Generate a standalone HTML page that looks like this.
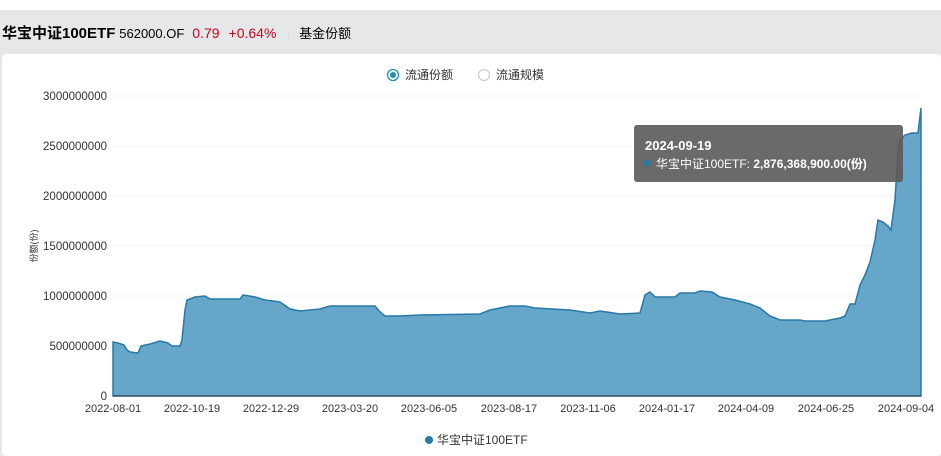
<!DOCTYPE html><html><head><meta charset="utf-8"><style>
body{margin:0;width:941px;height:456px;overflow:hidden;background:#fff;font-family:"Liberation Sans","Noto Sans CJK SC",sans-serif}
.band{position:absolute;left:0;top:10px;width:941px;height:446px;background:#e6e7e9}
.hdr{position:absolute;left:2px;top:22px;font-size:14px;white-space:nowrap}
.card{position:absolute;left:2px;top:54px;width:939px;height:402px;background:#fff;border-radius:4px}
</style></head><body>
<div class="band"></div>
<div class="hdr"><b style="font-size:15px">华宝中证100ETF</b> <span style="font-size:13px">562000.OF</span><span style="color:#d0021b;margin-left:8px">0.79</span><span style="color:#d0021b;margin-left:9px">+0.64%</span><span style="color:#ddd;margin-left:10px">|</span><span style="margin-left:9px;font-size:13px">基金份额</span></div>
<div class="card"></div>
<svg width="941" height="456" style="position:absolute;left:0;top:0" font-family="Liberation Sans,Noto Sans CJK SC,sans-serif">
<circle cx="393" cy="75" r="5.5" fill="none" stroke="#1e90b0" stroke-width="1.3"/><circle cx="393" cy="75" r="3" fill="#1e90b0"/>
<text x="405" y="79" font-size="12" fill="#333">流通份额</text>
<circle cx="484" cy="75" r="5.5" fill="none" stroke="#ccc" stroke-width="1.2"/>
<text x="496" y="79" font-size="12" fill="#333">流通规模</text>
<g stroke="#e4e8f0" stroke-dasharray="2,2"><line x1="113" x2="921" y1="96" y2="96"/><line x1="113" x2="921" y1="146" y2="146"/><line x1="113" x2="921" y1="196" y2="196"/><line x1="113" x2="921" y1="246" y2="246"/><line x1="113" x2="921" y1="296" y2="296"/><line x1="113" x2="921" y1="346" y2="346"/></g>
<g font-size="11.5" fill="#333" text-anchor="end"><text x="107" y="100">3000000000</text><text x="107" y="150">2500000000</text><text x="107" y="200">2000000000</text><text x="107" y="250">1500000000</text><text x="107" y="300">1000000000</text><text x="107" y="350">500000000</text><text x="107" y="400">0</text></g>
<text transform="translate(37,246) rotate(-90)" font-size="9" fill="#333" text-anchor="middle">份额(份)</text>
<path d="M113,396 L113,342 118,343 124,345 127,350 130,352 138,353 141,346 150,344 160,341 168,343 172,346 180,346 182,340 185,310 187,300 195,297 205,296 210,299 240,299 243,295 255,297 265,300 280,302 290,309 300,311 320,309 330,306 375,306 380,312 385,316 400,316 420,315 480,314 490,310 510,306 525,306 535,308 570,310 590,313 600,311 620,314 640,313 645,295 650,292 655,297 675,297 680,293 695,293 700,291 712,292 720,297 735,300 750,304 760,308 770,316 780,320 800,320 805,321 825,321 840,318 845,316 850,304 855,304 860,285 865,275 870,262 875,240 878,220 883,222 888,226 891,230 895,200 898,150 900,140 905,135 912,133 918,133 921,108 L921,396 Z" fill="#66a6c9" stroke="#2878a8" stroke-width="1.5"/>
<line x1="113" x2="921" y1="396" y2="396" stroke="#333"/>
<g font-size="11" fill="#333" text-anchor="middle"><text x="113" y="412">2022-08-01</text><text x="192" y="412">2022-10-19</text><text x="271" y="412">2022-12-29</text><text x="350" y="412">2023-03-20</text><text x="429" y="412">2023-06-05</text><text x="509" y="412">2023-08-17</text><text x="588" y="412">2023-11-06</text><text x="667" y="412">2024-01-17</text><text x="746" y="412">2024-04-09</text><text x="826" y="412">2024-06-25</text><text x="906" y="412">2024-09-04</text></g>
<circle cx="429" cy="440" r="4" fill="#2878a8"/><text x="437" y="444" font-size="12" fill="#333">华宝中证100ETF</text>
<rect x="634" y="125" width="269" height="57" rx="3" fill="#5a5a5a" fill-opacity="0.9"/>
<text x="645" y="150" font-size="13" font-weight="bold" fill="#fff">2024-09-19</text>
<circle cx="647" cy="163" r="3.5" fill="#2878a8"/>
<text x="656" y="168" font-size="12" fill="#fff">华宝中证100ETF: <tspan font-weight="bold">2,876,368,900.00(份)</tspan></text>
</svg>
</body></html>
